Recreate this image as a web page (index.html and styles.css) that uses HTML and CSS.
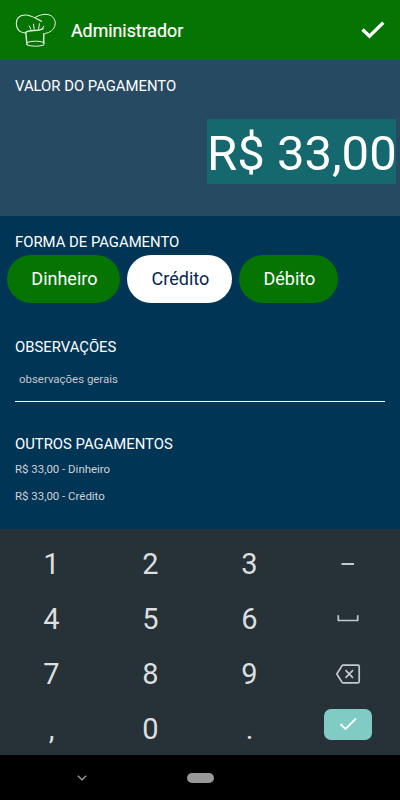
FILE: index.html
```
<!DOCTYPE html>
<html lang="pt-BR">
<head>
  <meta charset="UTF-8">
  <title>Pagamento</title>
  <link rel="stylesheet" href="styles.css">
</head>
<body>

  <header class="topbar">
    <svg class="logo" width="42" height="36" viewBox="0 0 42 36">
      <path d="M27 9.500 C21 7 17 2.800 10 3 C4 3.400 1 7 1.300 12 C1.600 17 5 20.500 10 21" stroke-width="1.100"/>
      <path d="M20 5.500 C24 3 29 1.800 33 2.600 C38 3.600 41 8 40 13 C39 18 35 20.500 30 21.500" stroke-width="1"/>
      <path d="M10 21 C12 18.800 15 18.500 19 18.500 C23 18.500 26 17.800 28.500 16.600" stroke-width="1.300"/>
      <path d="M10.800 20.500 L12 33 M29 21 C28.500 25 28.600 29 29 32.500" stroke-width="1.400"/>
      <path d="M12 30.500 C17 28.700 24 28.700 29 30.500 M12 33 C17 34.600 24 34.600 29 33" stroke-width="1"/>
      <path d="M14 13.500 L16 17.500 M18.500 11.800 L19.200 17.500 M24.500 11.300 L23.500 17.500 M29 13.800 L27 17" stroke-width="1"/>
    </svg>
    <h1>Administrador</h1>
    <svg class="confirm" width="24" height="18" viewBox="0 0 24 18">
      <path d="M1.500 8.500 L8.500 15.200 L22.300 1.600"/>
    </svg>
  </header>

  <section class="amount">
    <h2>VALOR DO PAGAMENTO</h2>
    <div class="value"><span>R$ 33,00</span></div>
  </section>

  <main class="form">
    <h2>FORMA DE PAGAMENTO</h2>
    <div class="methods">
      <button class="cash">Dinheiro</button>
      <button class="selected">Crédito</button>
      <button class="debit">Débito</button>
    </div>

    <h2 class="notes-title">OBSERVAÇÕES</h2>
    <div class="notes">observações gerais</div>

    <h2>OUTROS PAGAMENTOS</h2>
    <ul class="payments">
      <li>R$ 33,00 - Dinheiro</li>
      <li>R$ 33,00 - Crédito</li>
    </ul>
  </main>

  <div class="keyboard">
    <div class="key">1</div>
    <div class="key">2</div>
    <div class="key">3</div>
    <div class="key action">
      <svg width="24" height="24" viewBox="0 0 24 24"><path d="M5.500 12 H18" stroke-width="2"/></svg>
    </div>
    <div class="key">4</div>
    <div class="key">5</div>
    <div class="key">6</div>
    <div class="key action">
      <svg width="24" height="24" viewBox="0 0 24 24"><path d="M2.300 8.200 V13.500 H21.700 V8.200" stroke-width="1.700"/></svg>
    </div>
    <div class="key">7</div>
    <div class="key">8</div>
    <div class="key">9</div>
    <div class="key action">
      <svg width="26" height="24" viewBox="0 0 26 24">
        <path d="M8 3.200 H23 Q24.200 3.200 24.200 4.400 V19.600 Q24.200 20.800 23 20.800 H8 Q7.400 20.800 7 20.300 L1.800 12 L7 3.700 Q7.400 3.200 8 3.200 Z" stroke-width="1.700"/>
        <path d="M10.500 8.200 L18 15.800 M18 8.200 L10.500 15.800" stroke-width="1.700"/>
      </svg>
    </div>
    <div class="key">,</div>
    <div class="key">0</div>
    <div class="key">.</div>
    <div class="key action">
      <div class="enter">
        <svg width="18" height="14" viewBox="0 0 18 14"><path d="M1.500 7 L6.500 12 L17 1.500" stroke-width="1.800"/></svg>
      </div>
    </div>
  </div>

  <nav class="navbar">
    <svg width="10" height="6" viewBox="0 0 10 6"><path d="M0.800 0.800 L5 4.800 L9.200 0.800"/></svg>
    <div class="home"></div>
  </nav>

</body>
</html>
```
FILE: styles.css
```
* {
  box-sizing: border-box;
}
body {
  font-family: Roboto, sans-serif;
  background-color: #003556;
  color: #ffffff;
  margin: 0;
  height: 800px;
  display: flex;
  flex-direction: column;
}
h1, h2 {
  margin: 0;
  font-weight: normal;
}
h2 {
  font-size: 14.85px;
  line-height: 20px;
}
svg {
  fill: none;
  stroke: #ffffff;
}
.topbar {
  height: 60px;
  background-color: #057402;
  display: flex;
  align-items: center;
  padding: 0 15px;
}
.logo {
  stroke: #e6f1e6;
}
.topbar h1 {
  font-size: 17.8px;
  line-height: 24px;
  margin-left: 14px;
  padding-top: 2px;
  -webkit-text-stroke: 0.2px #ffffff;
}
.confirm {
  margin-left: auto;
  stroke-width: 3.4;
}
.amount {
  height: 156px;
  background-color: #264a62;
  padding-top: 16px;
}
.amount h2 {
  padding-left: 15px;
}
.value {
  display: flex;
  justify-content: flex-end;
  padding: 23px 4px 0 0;
}
.value span {
  background-color: #16686f;
  font-size: 49px;
  line-height: 61px;
  padding-top: 4px;
  text-align: center;
  width: 189px;
  white-space: nowrap;
}
.form {
  height: 313px;
  padding: 16px 15px 0;
}
.methods {
  display: flex;
  gap: 7px;
  margin: 2.5px 0 0 -7.6px;
}
.methods button {
  font-family: inherit;
  font-size: 18px;
  color: #ffffff;
  background-color: #057402;
  border: none;
  border-radius: 24px;
  height: 48px;
  padding: 0 0 0 1px;
}
.methods .cash {
  width: 113px;
}
.methods .selected {
  width: 105px;
  background-color: #ffffff;
  color: #05264f;
}
.methods .debit {
  width: 99px;
}
.notes-title {
  margin-top: 34.5px;
}
.notes {
  height: 45px;
  margin-bottom: 32px;
  padding: 14px 4px 0;
  font-size: 11.45px;
  line-height: 16px;
  color: #c3c6cc;
  border-bottom: 1px solid #ffffff;
}
.payments {
  list-style: none;
  margin: 7px 0 0;
  padding: 0;
  font-size: 11.45px;
  line-height: 16px;
  color: #d0d2d6;
}
.payments li {
  margin-bottom: 11px;
}
.keyboard {
  height: 226px;
  background-color: #263138;
  display: grid;
  grid-template-columns: repeat(4, 99px);
  grid-template-rows: repeat(4, 55px);
  padding: 7px 0 0 2px;
}
.key {
  display: flex;
  align-items: center;
  justify-content: center;
  font-size: 29px;
  color: #dcdedf;
}
.action {
  padding-right: 1px;
}
.key svg {
  stroke: #c5c9cb;
}
.enter {
  width: 48px;
  height: 31px;
  margin-bottom: 9px;
  border-radius: 7px;
  background-color: #80cbc4;
  display: flex;
  align-items: center;
  justify-content: center;
}
.key .enter svg {
  stroke: #ffffff;
}
.navbar {
  height: 45px;
  background-color: #000000;
  display: flex;
  align-items: center;
  padding-left: 77px;
}
.navbar svg {
  stroke: #a0a0a0;
  stroke-width: 1.2;
}
.home {
  width: 27px;
  height: 10px;
  margin-left: 100px;
  border-radius: 5px;
  background-color: #999999;
}
```
